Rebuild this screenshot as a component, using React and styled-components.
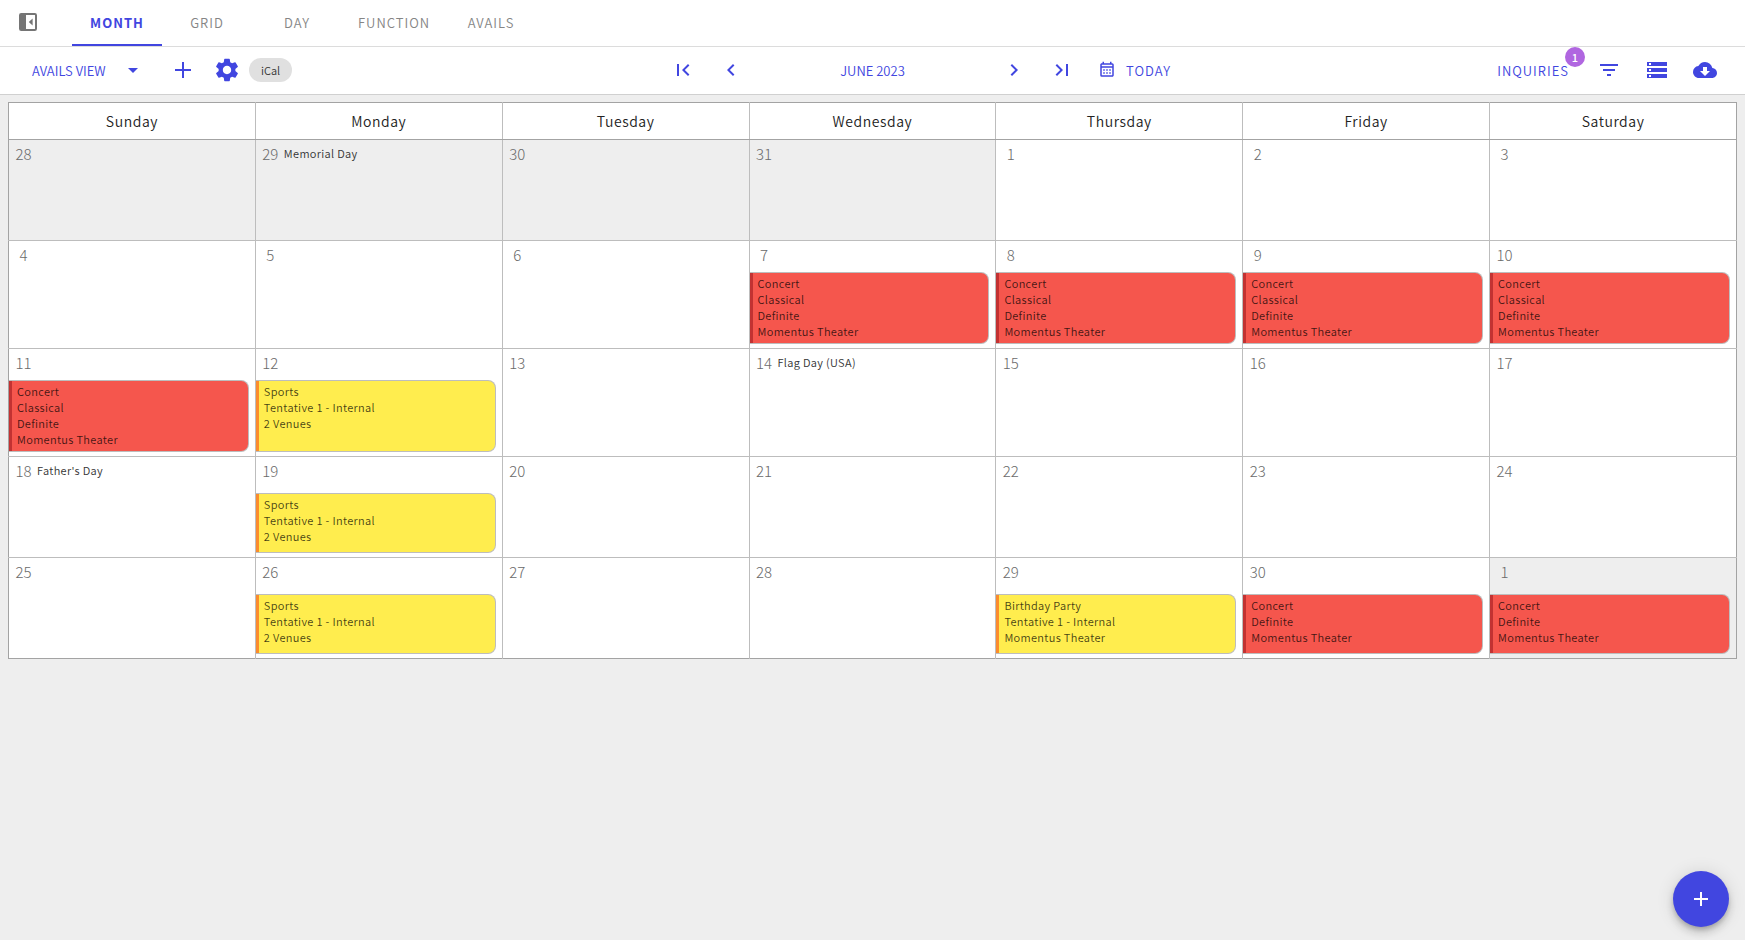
import React from "react";
import styled, { createGlobalStyle, css } from "styled-components";
import {
  MdArrowDropDown,
  MdChevronLeft,
  MdChevronRight,
  MdCloudDownload,
  MdFilterList,
  MdFirstPage,
  MdLastPage,
  MdSettings,
  MdStorage,
} from "react-icons/md";

const color = {
  primary: "#4146e0",
  muted: "#858585",
  text: "#222222",
  page: "#eeeeee",
  line: "#bdbdbd",
  frame: "#a3a3a3",
  badge: "#b066e0",
};

const GlobalStyle = createGlobalStyle`
  *, *::before, *::after { box-sizing: border-box; }
  body {
    margin: 0;
    min-height: 100vh;
    background: ${color.page};
    color: ${color.text};
    font-family: "Noto Sans CJK SC", "Noto Sans CJK JP", "Open Sans", sans-serif;
    font-size: 13px;
    font-weight: 350;
  }
  button, select { font-family: inherit; font-weight: inherit; }
`;

const plainButton = css`
  display: inline-flex;
  align-items: center;
  justify-content: center;
  border: 0;
  padding: 0;
  background: transparent;
  cursor: pointer;
`;

const TopBar = styled.header`
  display: flex;
  align-items: stretch;
  height: 47px;
  background: #fff;
  border-bottom: 1px solid #dcdcdc;
`;

const PanelToggle = styled.button`
  ${plainButton}
  width: 72px;
  padding: 0 16px 2px 0;
`;

const Tab = styled.button`
  ${plainButton}
  min-width: 90px;
  padding: 0 16px;
  border-bottom: 2px solid ${(p) => (p.$active ? color.primary : "transparent")};
  color: ${(p) => (p.$active ? color.primary : color.muted)};
  font-size: 13px;
  font-weight: ${(p) => (p.$active ? 700 : 350)};
  letter-spacing: 1px;
`;

const Toolbar = styled.div`
  display: grid;
  grid-template-columns: 1fr auto 1fr;
  height: 48px;
  padding-bottom: 1px;
  background: #fff;
  border-bottom: 1px solid #d0d0d0;
  color: ${color.primary};
`;

const ToolGroup = styled.div`
  display: flex;
  align-items: center;
`;

const StartTools = styled(ToolGroup)`
  padding-left: 32px;
`;

const EndTools = styled(ToolGroup)`
  padding-right: 16px;
`;

const Spacer = styled.div`
  flex: 1;
`;

const ViewPicker = styled.label`
  display: grid;
  grid-template-columns: 1fr 24px;
  align-items: center;
  width: 113px;
  margin-right: 16px;

  select {
    grid-area: 1 / 1 / 2 / 3;
    appearance: none;
    width: 100%;
    height: 36px;
    padding: 0;
    border: 0;
    background: transparent;
    color: inherit;
    font-size: 13px;
    cursor: pointer;
  }

  svg {
    grid-area: 1 / 2;
    pointer-events: none;
  }
`;

const IconButton = styled.button`
  ${plainButton}
  width: ${(p) => p.$width || 48}px;
  height: 36px;
  color: inherit;
`;

const Chip = styled.button`
  ${plainButton}
  height: 24px;
  padding: 0 12px;
  border-radius: 12px;
  background: #e0e0e0;
  color: #333;
  font-size: 11px;
`;

const MonthLabel = styled.button`
  ${plainButton}
  width: 235px;
  height: 36px;
  color: inherit;
  font-size: 13px;
`;

const TextButton = styled.button`
  ${plainButton}
  position: relative;
  gap: 10px;
  height: 36px;
  padding: 0 ${(p) => p.$pad || 12}px;
  color: inherit;
  font-size: 13px;
  letter-spacing: 1px;
`;

const Badge = styled.span`
  position: absolute;
  top: -5px;
  right: 0;
  width: 20px;
  height: 20px;
  border-radius: 50%;
  background: ${color.badge};
  color: #fff;
  font-size: 11px;
  font-weight: 500;
  line-height: 20px;
  text-align: center;
  letter-spacing: 0;
`;

const Main = styled.main`
  padding: 7px 8px;
`;

const MonthTable = styled.table`
  width: 100%;
  table-layout: fixed;
  border-collapse: collapse;
  border: 1px solid ${color.frame};
  background: #fff;
`;

const WeekdayCell = styled.th`
  height: 37px;
  padding: 0;
  border-right: 1px solid ${color.line};
  border-bottom: 1px solid ${color.frame};
  font-size: 14px;
  font-weight: 350;
  letter-spacing: 0.04em;

  &:last-child { border-right: 0; }
`;

const DayCell = styled.td`
  padding: 0;
  vertical-align: top;
  background: ${(p) => (p.$outside ? color.page : "#fff")};
  border-right: 1px solid ${color.line};
  border-bottom: 1px solid ${color.line};

  &:last-child { border-right: 0; }
  tr:last-child > & { border-bottom: 0; }
`;

const DayBody = styled.div`
  display: flex;
  flex-direction: column;
  justify-content: space-between;
  min-height: 100px;
  padding-bottom: 4px;
`;

const DayHead = styled.div`
  display: flex;
  height: 31px;
`;

const DayNumber = styled.span`
  width: 28px;
  padding-left: 1px;
  color: #6a6a6a;
  font-size: 15px;
  font-weight: 300;
  line-height: 28px;
  text-align: center;
`;

const Holiday = styled.span`
  color: #333;
  font-size: 11px;
  line-height: 26px;
  letter-spacing: 0.03em;
`;

const tones = {
  red: { fill: "#f5564d", strip: "#c23232" },
  yellow: { fill: "#ffed4e", strip: "#fb8c2e" },
};

const EventCard = styled.a`
  display: block;
  height: ${(p) => (p.$lines > 3 ? 72 : 60)}px;
  margin-right: 6px;
  padding: 2px 4px;
  border: 1px solid ${color.line};
  border-left: 0;
  border-radius: 0 8px 8px 0;
  background: ${(p) => tones[p.$tone].fill};
  box-shadow: inset 3px 0 0 ${(p) => tones[p.$tone].strip};
  color: rgba(0, 0, 0, 0.75);
  font-size: 11px;
  line-height: 16px;
  letter-spacing: 0.03em;
  text-decoration: none;
`;

const EventLine = styled.span`
  display: block;
  padding-left: 4px;
  overflow: hidden;
  white-space: nowrap;
  text-overflow: ellipsis;
`;

const AddButton = styled.button`
  ${plainButton}
  position: fixed;
  right: 16px;
  bottom: 13px;
  width: 56px;
  height: 56px;
  border-radius: 50%;
  background: ${color.primary};
  color: #fff;
  box-shadow: 0 3px 5px -1px rgba(0, 0, 0, 0.2), 0 6px 10px rgba(0, 0, 0, 0.14),
    0 1px 18px rgba(0, 0, 0, 0.12);
`;

function PlusIcon({ size }) {
  const half = size / 2;
  return (
    <svg width={size} height={size} fill="none" stroke="currentColor" strokeWidth="2" aria-hidden="true">
      <path d={`M${half} 0V${size}M0 ${half}H${size}`} />
    </svg>
  );
}

function PanelIcon() {
  return (
    <svg width="18" height="18" viewBox="0 0 18 18" aria-hidden="true">
      <rect x="1" y="1" width="16" height="16" rx="1.2" fill="#fff" stroke="#757575" strokeWidth="2" />
      <path d="M1 1h6v16H1z" fill="#757575" />
      <path d="M13.600 5.400v7.200L9.800 9z" fill="#757575" />
    </svg>
  );
}

function CalendarIcon() {
  return (
    <svg width="18" height="18" viewBox="0 0 24 24" fill="currentColor" aria-hidden="true">
      <path d="M7 11h2v2H7v-2m14-6v14c0 1.110-.89 2-2 2H5a2 2 0 0 1-2-2V5c0-1.100.9-2 2-2h1V1h2v2h8V1h2v2h1a2 2 0 0 1 2 2M5 7h14V5H5v2m14 12V9H5v10h14m-4-6v-2h2v2h-2m-4 0v-2h2v2h-2m-4 2h2v2H7v-2m8 2v-2h2v2h-2m-4 0v-2h2v2h-2z" />
    </svg>
  );
}

const concert = { tone: "red", lines: ["Concert", "Classical", "Definite", "Momentus Theater"] };
const closing = { tone: "red", lines: ["Concert", "Definite", "Momentus Theater"] };
const sports = { tone: "yellow", lines: ["Sports", "Tentative 1 - Internal", "2 Venues"] };
const birthday = { tone: "yellow", lines: ["Birthday Party", "Tentative 1 - Internal", "Momentus Theater"] };

const weekdays = ["Sunday", "Monday", "Tuesday", "Wednesday", "Thursday", "Friday", "Saturday"];

const weeks = [
  [
    { n: 28, outside: true },
    { n: 29, outside: true, holiday: "Memorial Day" },
    { n: 30, outside: true },
    { n: 31, outside: true },
    { n: 1 },
    { n: 2 },
    { n: 3 },
  ],
  [
    { n: 4 },
    { n: 5 },
    { n: 6 },
    { n: 7, event: concert },
    { n: 8, event: concert },
    { n: 9, event: concert },
    { n: 10, event: concert },
  ],
  [
    { n: 11, event: concert },
    { n: 12, event: sports },
    { n: 13 },
    { n: 14, holiday: "Flag Day (USA)" },
    { n: 15 },
    { n: 16 },
    { n: 17 },
  ],
  [
    { n: 18, holiday: "Father's Day" },
    { n: 19, event: sports },
    { n: 20 },
    { n: 21 },
    { n: 22 },
    { n: 23 },
    { n: 24 },
  ],
  [
    { n: 25 },
    { n: 26, event: sports },
    { n: 27 },
    { n: 28 },
    { n: 29, event: birthday },
    { n: 30, event: closing },
    { n: 1, outside: true, event: closing },
  ],
];

function Day({ day, lines }) {
  return (
    <DayCell $outside={day.outside}>
      <DayBody>
        <DayHead>
          <DayNumber>{day.n}</DayNumber>
          {day.holiday && <Holiday>{day.holiday}</Holiday>}
        </DayHead>
        {day.event && (
          <EventCard href="#event" $tone={day.event.tone} $lines={lines}>
            {day.event.lines.map((line) => (
              <EventLine key={line}>{line}</EventLine>
            ))}
          </EventCard>
        )}
      </DayBody>
    </DayCell>
  );
}

export default function App() {
  return (
    <>
      <GlobalStyle />
      <TopBar>
        <PanelToggle aria-label="Toggle side panel">
          <PanelIcon />
        </PanelToggle>
        {["MONTH", "GRID", "DAY", "FUNCTION", "AVAILS"].map((name, i) => (
          <Tab key={name} $active={i === 0}>
            {name}
          </Tab>
        ))}
      </TopBar>

      <Toolbar>
        <StartTools>
          <ViewPicker>
            <select aria-label="View" defaultValue="AVAILS VIEW">
              <option>AVAILS VIEW</option>
            </select>
            <MdArrowDropDown size={24} />
          </ViewPicker>
          <IconButton $width={44} aria-label="Add view">
            <PlusIcon size={16} />
          </IconButton>
          <IconButton $width={44} aria-label="Settings">
            <MdSettings size={28} />
          </IconButton>
          <Chip>iCal</Chip>
        </StartTools>

        <ToolGroup>
          <IconButton aria-label="First month">
            <MdFirstPage size={24} />
          </IconButton>
          <IconButton aria-label="Previous month">
            <MdChevronLeft size={24} />
          </IconButton>
          <MonthLabel>JUNE 2023</MonthLabel>
          <IconButton aria-label="Next month">
            <MdChevronRight size={24} />
          </IconButton>
          <IconButton aria-label="Last month">
            <MdLastPage size={24} />
          </IconButton>
        </ToolGroup>

        <EndTools>
          <TextButton>
            <CalendarIcon />
            TODAY
          </TextButton>
          <Spacer />
          <TextButton $pad={16}>
            INQUIRIES
            <Badge>1</Badge>
          </TextButton>
          <IconButton aria-label="Filter">
            <MdFilterList size={24} />
          </IconButton>
          <IconButton aria-label="List">
            <MdStorage size={24} />
          </IconButton>
          <IconButton aria-label="Download">
            <MdCloudDownload size={24} />
          </IconButton>
        </EndTools>
      </Toolbar>

      <Main>
        <MonthTable>
          <thead>
            <tr>
              {weekdays.map((name) => (
                <WeekdayCell key={name} scope="col">
                  {name}
                </WeekdayCell>
              ))}
            </tr>
          </thead>
          <tbody>
            {weeks.map((week, i) => {
              const lines = Math.max(...week.map((d) => (d.event ? d.event.lines.length : 0)));
              return (
                <tr key={i}>
                  {week.map((day) => (
                    <Day key={day.n} day={day} lines={lines} />
                  ))}
                </tr>
              );
            })}
          </tbody>
        </MonthTable>
      </Main>

      <AddButton aria-label="Add event">
        <PlusIcon size={14} />
      </AddButton>
    </>
  );
}
